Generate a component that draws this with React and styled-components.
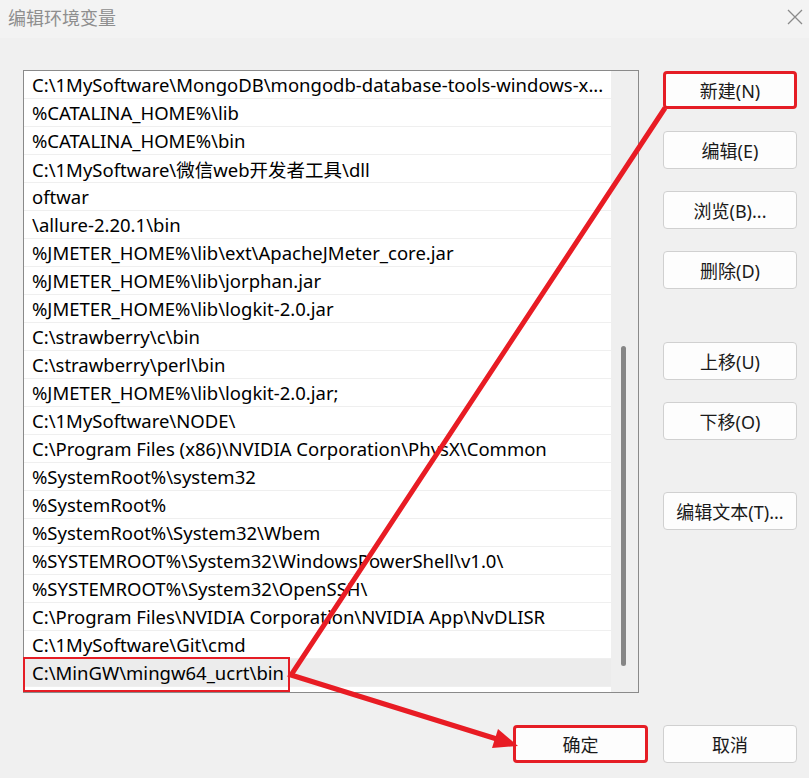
import React from "react";
import styled, { createGlobalStyle } from "styled-components";

const GlobalStyle = createGlobalStyle`
  html, body {
    margin: 0;
    padding: 0;
    background: #f0f0f0;
    font-family: "Noto Sans", "Noto Sans CJK SC", sans-serif;
  }
`;

const Window = styled.div`
  position: relative;
  width: 809px;
  height: 778px;
  background: #f0f0f0;
  overflow: hidden;
`;

const TitleBar = styled.div`
  height: 38px;
  background: #f3f3f3;
  display: flex;
  align-items: center;
  justify-content: space-between;
  padding: 0 6px 4px 8px;
  box-sizing: border-box;
`;

const Title = styled.span`
  font-family: "Noto Sans CJK SC", sans-serif;
  font-size: 18px;
  color: #8e8e8e;
`;

const Main = styled.div`
  display: flex;
  padding: 32px 0 0 23px;
  gap: 24px;
`;

const ListBox = styled.div`
  width: 616px;
  height: 623px;
  box-sizing: border-box;
  border: 1px solid #8a8a8a;
  background: #fff;
  display: flex;
`;

const Rows = styled.div`
  width: 587px;
`;

const Row = styled.div`
  position: relative;
  height: 28px;
  box-sizing: border-box;
  border-bottom: 1px solid #efefef;
  padding-left: 8px;
  display: flex;
  align-items: center;
  font-size: 18.5px;
  color: #000;
  white-space: nowrap;
  background: ${(p) => (p.$selected ? "#ececec" : "#fff")};
`;

const Highlight = styled.div`
  position: absolute;
  left: -1px;
  top: -2px;
  width: 267px;
  height: 35px;
  box-sizing: border-box;
  border: 2px solid #e51d25;
`;

const ScrollTrack = styled.div`
  flex: 1;
  background: #efefef;
  position: relative;
`;

const Thumb = styled.div`
  position: absolute;
  left: 10px;
  top: 275px;
  width: 5px;
  height: 320px;
  border-radius: 3px;
  background: #868686;
`;

const ButtonColumn = styled.div`
  display: flex;
  flex-direction: column;
  gap: 22px;
  padding-top: 1px;
`;

const Button = styled.button`
  width: ${(p) => p.$width || 134}px;
  height: 38px;
  margin-top: ${(p) => p.$push || 0}px;
  box-sizing: border-box;
  background: #fdfdfd;
  border: ${(p) => (p.$marked ? "3px solid #e51d25" : "1px solid #d0d0d0")};
  border-radius: 4px;
  font-family: "Noto Sans", "Noto Sans CJK SC", sans-serif;
  font-size: 18px;
  color: #1a1a1a;
  padding: 0;
  display: flex;
  align-items: center;
  justify-content: center;
`;

const Footer = styled.div`
  display: flex;
  justify-content: flex-end;
  gap: 15px;
  padding: 32px 12px 0 0;
`;

const CloseIcon = () => (
  <svg width="16" height="16" viewBox="0 0 16 16">
    <path d="M1 1 L15 15 M15 1 L1 15" stroke="#8a8a8a" strokeWidth="1.3" fill="none" />
  </svg>
);

const Annotation = styled.svg`
  position: absolute;
  left: 0;
  top: 0;
  pointer-events: none;
`;

const paths = [
  "C:\\1MySoftware\\MongoDB\\mongodb-database-tools-windows-x...",
  "%CATALINA_HOME%\\lib",
  "%CATALINA_HOME%\\bin",
  "C:\\1MySoftware\\微信web开发者工具\\dll",
  "oftwar",
  "\\allure-2.20.1\\bin",
  "%JMETER_HOME%\\lib\\ext\\ApacheJMeter_core.jar",
  "%JMETER_HOME%\\lib\\jorphan.jar",
  "%JMETER_HOME%\\lib\\logkit-2.0.jar",
  "C:\\strawberry\\c\\bin",
  "C:\\strawberry\\perl\\bin",
  "%JMETER_HOME%\\lib\\logkit-2.0.jar;",
  "C:\\1MySoftware\\NODE\\",
  "C:\\Program Files (x86)\\NVIDIA Corporation\\PhysX\\Common",
  "%SystemRoot%\\system32",
  "%SystemRoot%",
  "%SystemRoot%\\System32\\Wbem",
  "%SYSTEMROOT%\\System32\\WindowsPowerShell\\v1.0\\",
  "%SYSTEMROOT%\\System32\\OpenSSH\\",
  "C:\\Program Files\\NVIDIA Corporation\\NVIDIA App\\NvDLISR",
  "C:\\1MySoftware\\Git\\cmd",
  "C:\\MinGW\\mingw64_ucrt\\bin",
];

const sideButtons = [
  { label: "新建(N)", marked: true },
  { label: "编辑(E)" },
  { label: "浏览(B)..." },
  { label: "删除(D)" },
  { label: "上移(U)", push: 31 },
  { label: "下移(O)" },
  { label: "编辑文本(T)...", push: 30 },
];

export default function App() {
  const last = paths.length - 1;
  return (
    <Window>
      <GlobalStyle />
      <TitleBar>
        <Title>编辑环境变量</Title>
        <CloseIcon />
      </TitleBar>
      <Main>
        <ListBox>
          <Rows>
            {paths.map((p, i) => (
              <Row key={i} $selected={i === last}>
                {p}
                {i === last && <Highlight />}
              </Row>
            ))}
          </Rows>
          <ScrollTrack>
            <Thumb />
          </ScrollTrack>
        </ListBox>
        <ButtonColumn>
          {sideButtons.map((b) => (
            <Button key={b.label} $marked={b.marked} $push={b.push}>
              {b.label}
            </Button>
          ))}
        </ButtonColumn>
      </Main>
      <Footer>
        <Button $width={135} $marked>确定</Button>
        <Button $width={134}>取消</Button>
      </Footer>
      <Annotation width="809" height="778" viewBox="0 0 809 778">
        <polyline
          points="665,108 291,675 500,740"
          fill="none"
          stroke="#e81c24"
          strokeWidth="5"
          strokeLinejoin="miter"
        />
        <polygon points="518,746 498,729 492,748" fill="#e81c24" />
      </Annotation>
    </Window>
  );
}
